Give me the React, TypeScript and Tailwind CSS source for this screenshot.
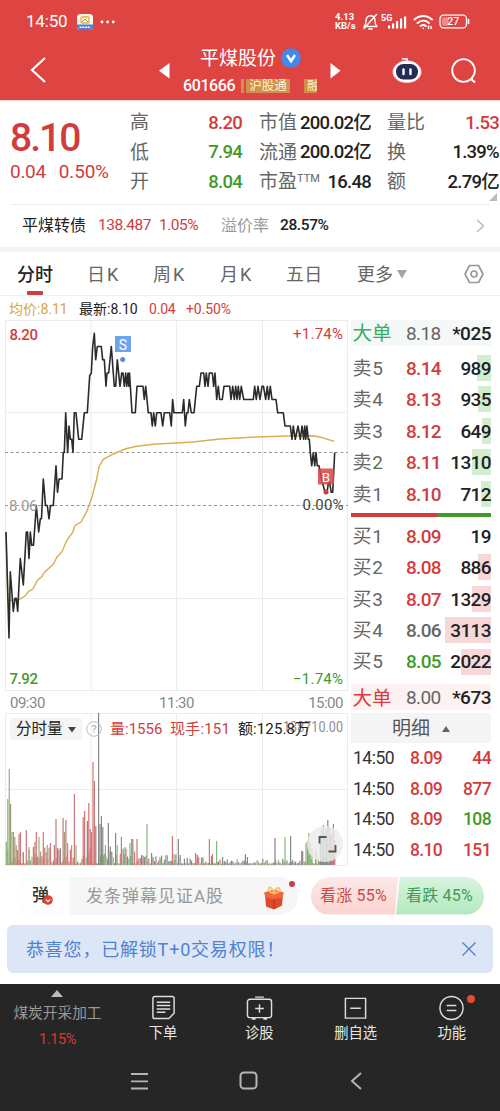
import React from 'react';

const RED = '#d23c3c';
const GREEN = '#3f9a2c';

/* Price line: [x, cents above yesterday's close] */
const pricePoints: [number, number][] = [
  [6, -2], [9, -10], [10.3, -5], [13.3, -8], [15, -7], [16.3, -7], [17.7, -8], [20.3, -4], [23.3, -6], [26.3, -2],
  [27.5, -2], [29, -4], [30.3, -2], [31.7, -3], [33.5, -3], [36.3, 0], [38.7, -2], [40.3, -1], [41.5, -1], [43.3, 2],
  [45.5, 0], [47.3, 0], [49, -1], [50.5, 0], [53.3, 0], [56, 3], [57.5, 1], [59, 2], [62, 2], [63.3, 4],
  [64.3, 4], [65.7, 7], [67.7, 4], [69, 6], [70.3, 5], [71.7, 5], [73, 4], [74.3, 7], [76, 7], [78.7, 5],
  [81.7, 5], [84.3, 7], [87.3, 7], [89.7, 9.8], [91.3, 10], [92.7, 12], [94.3, 13], [95.7, 11], [97.3, 12], [101.3, 12],
  [102.7, 11], [104.3, 11], [106, 9], [107, 10], [108.7, 10], [111.3, 12], [114.3, 9], [115.7, 9], [117.3, 11], [120, 9],
  [121.7, 10], [123, 10], [124.3, 9], [125.7, 10], [126.7, 9], [128, 10], [128.8, 9], [129.5, 10], [132, 7], [135.3, 7],
  [137, 9], [143, 9], [144.3, 8], [145.7, 9], [148.3, 7], [151, 7], [152.3, 6], [153.7, 7], [155.3, 6], [156.7, 7],
  [161, 7], [162.7, 6], [164.3, 7], [169.7, 7], [171.3, 6], [172.6, 8], [174, 7], [182.3, 7], [183.7, 8], [185.3, 6],
  [186.7, 7], [188, 7], [189.3, 8], [191.3, 7], [194, 7], [196.7, 9], [199.3, 9], [201, 10], [203.7, 10], [205, 9],
  [206.3, 10], [208, 9], [209.3, 10], [212.3, 10], [213.7, 9], [215, 10], [216.7, 8], [218.3, 9], [219.7, 8], [222.3, 8],
  [224, 9], [229.7, 9], [231, 8], [232.7, 9], [234.3, 8], [235.7, 9], [237, 8], [238.3, 9], [239.7, 8], [241.3, 9],
  [243.7, 8], [253.3, 8], [254.7, 9], [256.3, 8], [258, 9], [260, 8], [262, 9], [263.5, 9], [265.7, 8], [267.3, 9],
  [268.7, 8], [270.3, 9], [272, 8], [276, 8], [277.7, 7], [283.3, 7], [285, 6], [290.3, 6], [292, 5], [293.3, 6],
  [295.3, 5], [298, 6], [300.3, 5], [302, 6], [303.7, 5], [304.7, 6], [305.8, 5], [306.9, 6], [308.3, 5], [309.3, 5],
  [310.3, 4], [311.7, 3], [313.3, 4], [314.7, 3], [316, 4], [317.3, 3], [319, 3], [321.5, 2], [325, 1], [327, 1],
  [329, 2], [331.3, 1], [332.7, 1], [334.7, 4],
];

const averagePoints =
  '6,212 8,281 13,280 20,279 25,276 28.5,271.5 32.7,269 37.7,260 41.7,256.7 45,251.7 53.5,244 56.7,237.5 62,231.7 66.7,220.7 72.3,213 75,205.7 81,202 86.7,191.7 91.7,178 96.7,159 99,146.7 103.3,139.3 113.3,134 125,129 136.7,126.3 153.3,124.3 180,122.7 193,122 220,119 256.7,117 286.7,116 313,115.7 320,117 334.3,121.3';

type Tone = 'r' | 'g' | 'k' | 'o';

const toneColor: Record<Tone, string> = {
  r: '#cf7676',
  g: '#86b878',
  k: '#878787',
  o: '#a89a78',
};

/* Volume spikes: [x, height, tone] */
const spikes: [number, number, Tone][] = [
  [6.3, 23, 'g'], [7.8, 66, 'g'], [9.3, 96, 'g'], [10.6, 61, 'o'], [12, 33, 'g'], [13.4, 33, 'o'], [14.8, 28, 'o'], [16.2, 20, 'o'],
  [17.5, 15, 'r'], [19, 31, 'r'], [20.4, 33, 'r'], [23.3, 13, 'r'], [26.3, 35, 'r'], [29, 18, 'g'], [33.4, 18, 'r'], [34.9, 23, 'r'],
  [36.3, 33, 'r'], [39, 28, 'g'], [43.3, 33, 'r'], [47.3, 20, 'g'], [50.4, 22, 'r'], [54.4, 20, 'r'], [56, 46, 'r'], [57.6, 17, 'k'],
  [60.4, 17, 'k'], [63.1, 47, 'r'], [64.5, 33, 'o'], [65.9, 45, 'r'], [67.6, 22, 'o'], [71.6, 20, 'g'], [74.4, 71, 'r'], [76, 20, 'g'],
  [83.2, 48, 'r'], [84.6, 54, 'r'], [87.4, 44, 'k'], [88.8, 62, 'r'], [90.2, 36, 'r'], [91.6, 33, 'r'], [93, 103, 'r'], [94.4, 84, 'r'],
  [95.8, 39, 'k'], [98.6, 152, 'k'], [100, 41, 'k'], [101.4, 49, 'k'], [102.8, 38, 'k'], [105.4, 20, 'g'], [108.4, 42, 'k'],
  [115.6, 32, 'k'], [117.2, 20, 'g'], [121.4, 28, 'r'], [125, 18, 'g'], [130, 22, 'g'], [131.5, 26, 'g'], [132.8, 26, 'k'], [137, 26, 'r'],
  [141.6, 10, 'k'], [147, 41, 'g'], [151.6, 12, 'k'], [160, 8, 'g'], [172.4, 29, 'r'], [174, 11, 'g'], [178.4, 26, 'k'],
  [195.6, 12, 'r'], [197.6, 10, 'r'], [209.4, 26, 'r'], [212.4, 11, 'r'], [216.6, 24, 'g'], [222.6, 8, 'k'], [245.4, 11, 'k'],
  [247.4, 8, 'k'], [275, 27, 'k'], [285, 28, 'g'], [290.6, 29, 'k'], [301.6, 14, 'r'], [306, 22, 'g'], [307.4, 24, 'o'], [308.8, 32, 'g'],
  [310.2, 22, 'g'], [312, 16, 'g'], [316, 16, 'o'], [320.4, 30, 'k'], [321.8, 36, 'k'], [323.4, 40, 'k'], [325, 32, 'k'], [326.4, 36, 'k'],
  [327.8, 45, 'k'], [329.2, 38, 'k'], [330.6, 30, 'k'], [332, 32, 'r'], [333.4, 41, 'r'], [334.8, 25, 'r'],
];

/* Low bars filling the minutes between spikes */
const quietBars = Array.from({ length: 231 }, (_, i) => {
  const x = 6.3 + i * 1.425;
  const wave = Math.abs(Math.sin(i * 12.9898) * 43758.5453) % 1;
  const limit = x < 60 ? 16 : x < 105 ? 22 : x < 135 ? 18 : x < 220 ? 9 : x < 300 ? 5 : 13;
  const tones: Tone[] = x < 95 ? ['r', 'r', 'g', 'o'] : x < 225 ? ['k', 'g', 'k', 'r'] : ['k', 'o', 'k', 'g'];
  return { x, h: 1.5 + wave * wave * limit, tone: tones[Math.floor(wave * 97) % 4] };
});

const asks = [
  { label: '卖5', price: '8.14', volume: '989', depth: 14 },
  { label: '卖4', price: '8.13', volume: '935', depth: 13 },
  { label: '卖3', price: '8.12', volume: '649', depth: 9 },
  { label: '卖2', price: '8.11', volume: '1310', depth: 19 },
  { label: '卖1', price: '8.10', volume: '712', depth: 10 },
];

const bids = [
  { label: '买1', price: '8.09', volume: '19', depth: 0, color: 'text-[#d23c3c]' },
  { label: '买2', price: '8.08', volume: '886', depth: 13, color: 'text-[#d23c3c]' },
  { label: '买3', price: '8.07', volume: '1329', depth: 19, color: 'text-[#d23c3c]' },
  { label: '买4', price: '8.06', volume: '3113', depth: 46, color: 'text-[#666]' },
  { label: '买5', price: '8.05', volume: '2022', depth: 30, color: 'text-[#3f9a2c]' },
];

const trades = [
  { price: '8.09', volume: '44', color: 'text-[#d23c3c]' },
  { price: '8.09', volume: '877', color: 'text-[#d23c3c]' },
  { price: '8.09', volume: '108', color: 'text-[#3f9a2c]' },
  { price: '8.10', volume: '151', color: 'text-[#d23c3c]' },
];

function StatusBar() {
  return (
    <div className="flex h-[42px] items-center pt-px pl-[26px] text-white">
      <span className="w-[42px] text-[17px] tracking-[-0.2px]">14:50</span>
      <svg className="ml-[9px]" width="16" height="16" viewBox="0 0 16 16">
        <rect width="16" height="16" rx="3.5" fill="#fdf6ea" />
        <path d="M0 10.5h16v2a3.5 3.5 0 0 1-3.5 3.5h-9A3.5 3.5 0 0 1 0 12.500z" fill="#4a7de0" />
        <rect x="4" y="3" width="8" height="6" rx="1" fill="none" stroke="#e8b23c" strokeWidth="1.3" />
        <path d="M5 8l3-3 3 3" fill="none" stroke="#67b48c" strokeWidth="1" />
        <path d="M2.500 13.200h11" stroke="#fff" strokeWidth="1.4" strokeDasharray="2 .7" />
      </svg>
      <svg className="ml-[7px]" width="16" height="4" viewBox="0 0 16 4" fill="#fff">
        <circle cx="2" cy="2" r="1.4" />
        <circle cx="7.600" cy="2" r="1.4" />
        <circle cx="13.200" cy="2" r="1.4" />
      </svg>
      <div className="ml-[219px] w-[24px] text-[9.500px] leading-[8.5px] font-bold">
        <div>4.13</div>
        <div>KB/s</div>
      </div>
      <svg className="ml-[3px]" width="17" height="18" viewBox="0 0 17 18" fill="none" stroke="#fff" strokeWidth="1.400" strokeLinecap="round" strokeLinejoin="round">
        <path d="M2 13.500h13c-1.500-1.500-2-2.500-2-5.500 0-3-1.700-5.200-4.500-5.200S4 5 4 8c0 3-.5 4-2 5.500zM6.800 16h3.400M14.500 1.500L2 15.500" />
      </svg>
      <svg className="ml-[2px]" width="27" height="16" viewBox="0 0 27 16" fill="#fff">
        <text x="0" y="6.800" fontSize="9" fontWeight="700">5G</text>
        <rect x="7" y="11.500" width="2.200" height="3" />
        <rect x="11" y="9.500" width="2.200" height="5" />
        <rect x="15" y="7" width="2.200" height="7.500" />
        <rect x="19" y="4.500" width="2.200" height="10" />
        <rect x="23" y="2.500" width="2.200" height="12" />
      </svg>
      <svg className="ml-[5px]" width="21" height="16" viewBox="0 0 21 16" fill="none" stroke="#fff" strokeWidth="2" strokeLinecap="round">
        <path d="M1.500 5.500c5-4.700 12.500-4.700 17.500 0M4.500 8.900c3.400-3 8-3 11.500 0M7.500 12c1.800-1.400 3.700-1.400 5.300 0" />
        <path d="M10.200 14.300v.2M15.500 12v2.500M18 12.500v2" strokeWidth="1.500" />
      </svg>
      <svg className="ml-[5px]" width="32" height="15" viewBox="0 0 32 15">
        <rect x="1" y="1.200" width="26.500" height="12.600" rx="3.500" fill="none" stroke="#fff" strokeWidth="1.300" />
        <rect x="3" y="3.200" width="6.500" height="8.600" rx="1.500" fill="#fff" opacity=".4" />
        <path d="M29.500 5.500v4" stroke="#fff" strokeWidth="1.600" strokeLinecap="round" />
        <text x="14.300" y="11.300" fill="#fff" fontSize="10.500" fontWeight="500" textAnchor="middle">27</text>
      </svg>
    </div>
  );
}

function TitleBar() {
  return (
    <div className="flex h-[58px] items-start text-white">
      <svg className="mt-[14px] ml-[29px]" width="18" height="28" viewBox="0 0 18 28" fill="none" stroke="#fff" strokeWidth="2.200">
        <path d="M16 2L3 14l13 12" />
      </svg>
      <svg className="mt-[21px] ml-[112px]" width="11" height="16" viewBox="0 0 11 16" fill="#fff">
        <path d="M10.500 0v15.500L0 7.800z" />
      </svg>
      <div className="ml-[13px] w-[136px] pt-px">
        <div className="flex h-[29px] items-center pl-[17px]">
          <span className="mt-[3px] w-[78px] text-[19px] whitespace-nowrap">平煤股份</span>
          <svg className="ml-[3px]" width="20" height="20" viewBox="0 0 20 20">
            <circle cx="10" cy="10" r="9.800" fill="#4089ee" />
            <path d="M6 7l4 6.200L14 7" fill="none" stroke="#fff" strokeWidth="2.600" />
          </svg>
        </div>
        <div className="flex h-7 items-center overflow-hidden">
          <span className="w-[58px] text-[16px] font-medium tracking-[-0.4px]">601666</span>
          <span className="h-[14px] w-[3px] bg-[#d0914c]" />
          <span className="ml-[2px] h-[14px] w-[44px] bg-[#d0914c] text-center text-[12.500px] leading-[14px] text-[#fff3d6]">沪股通</span>
          <span className="ml-[14px] h-[14px] w-[13px] overflow-hidden bg-[#d0914c] pl-[3px] text-[12px] leading-[14px] text-[#fff3d6]">融</span>
        </div>
      </div>
      <svg className="mt-[21px] ml-[11px]" width="11" height="16" viewBox="0 0 11 16" fill="#fff">
        <path d="M.5 0v15.500L10.500 7.800z" />
      </svg>
      <svg className="mt-[14px] ml-[51px]" width="30" height="30" viewBox="0 0 30 30">
        <path d="M10.500 2.800h4.500v4" fill="none" stroke="#f4dfe6" strokeWidth="1.800" strokeLinecap="round" />
        <ellipse cx="15" cy="16" rx="14.500" ry="11" fill="#efd5e2" />
        <ellipse cx="15" cy="15.300" rx="13.300" ry="10.800" fill="#fff" />
        <rect x="4" y="8" width="22" height="15.500" rx="7.500" fill="#232d55" />
        <path d="M11.500 13.500v4.500M18.500 13.500v4.500" stroke="#fff" strokeWidth="2.400" strokeLinecap="round" />
      </svg>
      <svg className="mt-[15px] ml-[28px]" width="28" height="28" viewBox="0 0 28 28" fill="none" stroke="#fff" strokeWidth="1.800">
        <circle cx="13.500" cy="13.500" r="11.300" />
        <path d="M20.500 21.500l4.500 4" strokeWidth="2.200" />
      </svg>
    </div>
  );
}

interface StatProps {
  label: React.ReactNode;
  value: string;
  color?: string;
}

const Stat: React.FC<StatProps> = ({ label, value, color = 'text-[#222]' }) => (
  <div className="flex h-[29.200px] items-center justify-between whitespace-nowrap">
    <span className="text-[19px] text-[#666]">{label}</span>
    <span className={`pt-px text-[18.500px] font-medium tracking-[-0.75px] ${color}`}>{value}</span>
  </div>
);

function Quote() {
  return (
    <>
      <div className="flex h-[104px] border-t border-[#ffd9d3] pt-[8px]">
        <div className="w-[130px] pl-[10px] text-[#d23c3c]">
          <div className="mt-[9px] h-[40px] text-[39px] leading-[40px] font-medium tracking-[-2px]">8.10</div>
          <div className="mt-[2px] flex h-6 items-center gap-[13px] text-[19px] tracking-[-0.300px]">
            <span>0.04</span>
            <span className="tracking-[-0.200px]">0.50%</span>
          </div>
        </div>
        <div className="w-[112px]">
          <Stat label="高" value="8.20" color="text-[#d23c3c]" />
          <Stat label="低" value="7.94" color="text-[#3f9a2c]" />
          <Stat label="开" value="8.04" color="text-[#3f9a2c]" />
        </div>
        <div className="ml-[17px] w-[112px]">
          <Stat label="市值" value="200.02亿" />
          <Stat label="流通" value="200.02亿" />
          <Stat label={<>市盈<sup className="relative top-[-6px] align-baseline text-[11px] leading-none">TTM</sup></>} value="16.48" />
        </div>
        <div className="relative ml-[16px] w-[112px]">
          <Stat label="量比" value="1.53" color="text-[#d23c3c]" />
          <Stat label="换" value="1.39%" />
          <Stat label="额" value="2.79亿" />
          <svg className="absolute right-[2px] bottom-[3px]" width="8" height="8" viewBox="0 0 8 8">
            <path d="M8 0v8H0z" fill="#bbb" />
          </svg>
        </div>
      </div>
      <div className="mx-[10px] h-px bg-[#eee]" />
      <div className="flex h-[42px] items-center pl-[22px] text-[15.500px]">
        <span className="w-[76px] text-[16px] text-[#222]">平煤转债</span>
        <span className="w-[61px] tracking-[-0.500px] text-[#d23c3c]">138.487</span>
        <span className="w-[62px] tracking-[-0.500px] text-[#d23c3c]">1.05%</span>
        <span className="w-[59px] text-[16px] text-[#999]">溢价率</span>
        <span className="flex-1 font-medium tracking-[-0.400px] text-[#222]">28.57%</span>
        <svg className="mr-[15px]" width="9" height="14" viewBox="0 0 9 14" fill="none" stroke="#bbb" strokeWidth="1.500">
          <path d="M1 1l6.500 6L1 13" />
        </svg>
      </div>
      <div className="h-[5px] bg-[#f3f3f3]" />
    </>
  );
}

function Tabs() {
  return (
    <div className="relative flex h-[44px] items-center border-b border-[#f0f0f0] pt-px pl-[17px] text-[18px] whitespace-nowrap text-[#666]">
      <span className="w-[70px] font-medium text-[#222]">分时</span>
      <span className="w-[66px] tracking-[2px]">日K</span>
      <span className="w-[67px] tracking-[2px]">周K</span>
      <span className="w-[66px] tracking-[2px]">月K</span>
      <span className="w-[71px] tracking-[0.300px]">五日</span>
      <span className="w-[40px]">更多</span>
      <svg width="10" height="9" viewBox="0 0 10 9">
        <path d="M0 0h10L5 8.500z" fill="#a5a5a5" />
      </svg>
      <svg className="ml-[57px]" width="20" height="20" viewBox="0 0 20 20" fill="none" stroke="#999" strokeWidth="1.700" strokeLinejoin="round">
        <path d="M5.500 1.500h9L19 10l-4.500 8.500h-9L1 10z" />
        <circle cx="10" cy="10" r="3" />
      </svg>
      <span className="absolute bottom-0 left-[27px] h-[4px] w-[16px] rounded-[1px] bg-[#c9403f]" />
    </div>
  );
}

function AverageLine() {
  return (
    <div className="flex h-[24px] items-center pt-[2px] pl-[9px] text-[14px] whitespace-nowrap">
      <span className="w-[70px] text-[#d9a441]">均价:8.11</span>
      <span className="w-[70px] text-[#222]">最新:8.10</span>
      <span className="w-[37px] tracking-[-0.200px] text-[#d23c3c]">0.04</span>
      <span className="text-[#d23c3c] tracking-[-0.100px]">+0.50%</span>
    </div>
  );
}

function PriceChart() {
  const line = pricePoints.map(([x, k]) => `${x},${(185.5 - k * 13.25).toFixed(1)}`).join(' ');
  return (
    <svg className="block" width="349" height="371" viewBox="0 0 349 371">
      <path d="M5.500 .5h342v370h-342zM91 0v370M176.500 0v370M262.500 0v370M5 92.500h343M5 278.500h343" fill="none" stroke="#ececec" />
      <path d="M5 132.500h343M5 185.500h343" stroke="#999" strokeDasharray="3 2.500" />
      <polyline points={averagePoints} fill="none" stroke="#d9ae50" strokeWidth="1.400" />
      <polyline points={line} fill="none" stroke="#2b2b2b" strokeWidth="1.600" strokeLinejoin="round" />
      <rect x="115" y="16" width="16" height="16" fill="#6fa3ee" />
      <text x="123" y="29.500" fill="#fff" fontSize="14" textAnchor="middle">S</text>
      <circle cx="122.700" cy="39.500" r="2.500" fill="#6488cf" />
      <rect x="318" y="148.500" width="16" height="16" fill="#db4848" fillOpacity=".88" />
      <text x="326" y="161.500" fill="#fff" fontSize="13.500" textAnchor="middle">B</text>
      <circle cx="326" cy="172" r="2.500" fill="#d23c3c" />
      <g fontSize="15" fontWeight="500">
        <text x="9.500" y="19.500" fill={RED} textLength="28.500">8.20</text>
        <text x="9" y="191" fill="#999" textLength="28.500" fontWeight="400">8.06</text>
        <text x="9.500" y="363.500" fill={GREEN} textLength="28.500">7.92</text>
        <text x="293" y="19" fill={RED} textLength="50" fontWeight="400">+1.74%</text>
        <text x="302.500" y="190" fill="#444" textLength="41" fontWeight="400">0.00%</text>
        <text x="293" y="363.500" fill={GREEN} textLength="50" fontWeight="400">−1.74%</text>
      </g>
    </svg>
  );
}

function VolumeChart() {
  return (
    <div className="relative">
      <svg className="block" width="349" height="153" viewBox="0 0 349 153">
        <path d="M5.500 .5h342v152h-342zM91 0v152M176.500 0v152M262.500 0v152M5 76.500h343" fill="none" stroke="#ececec" />
        {quietBars.map((b, i) => (
          <rect key={i} x={b.x - 0.6} y={152 - b.h} width="1.200" height={b.h} fill={toneColor[b.tone]} />
        ))}
        {spikes.map(([x, h, tone], i) => (
          <rect key={i} x={x - 0.6} y={152 - h} width="1.200" height={h} fill={toneColor[tone]} />
        ))}
        <circle cx="325" cy="131" r="18" fill="#ececec" fillOpacity=".82" />
        <path d="M319.500 130.500v-6.500h7M335.500 132v6.500h-7" fill="none" stroke="#555" strokeWidth="1.800" />
        <text x="283" y="19" fill="#8c8c8c" fontSize="14.500" textLength="60" lengthAdjust="spacingAndGlyphs">138710.00</text>
      </svg>
      <div className="absolute top-[5px] left-[10px] flex h-[22px] items-center text-[15px] whitespace-nowrap">
        <span className="flex h-[22px] w-[72px] items-center rounded-[3px] bg-[#f3f3f3]/90 pt-px pl-[6px] text-[15.500px] text-[#222]">
          分时量
          <svg className="ml-[5px]" width="8" height="6" viewBox="0 0 8 6">
            <path d="M0 0h8L4 5.500z" fill="#444" />
          </svg>
        </span>
        <svg className="ml-[4px]" width="16" height="16" viewBox="0 0 16 16">
          <circle cx="8" cy="8" r="7.300" fill="none" stroke="#bbb" />
          <text x="8" y="12" fill="#aaa" fontSize="11.500" textAnchor="middle">?</text>
        </svg>
        <span className="ml-[8px] w-[60px] text-[#d23c3c]">量:1556</span>
        <span className="w-[68px] tracking-[0.200px] text-[#d23c3c]">现手:151</span>
        <span className="tracking-[0.100px] text-[#222]">额:125.8万</span>
      </div>
    </div>
  );
}

interface LevelProps {
  label: string;
  price: string;
  volume: string;
  depth: number;
  color: string;
  depthColor: string;
}

const Level: React.FC<LevelProps> = ({ label, price, volume, depth, color, depthColor }) => (
  <div className="relative flex h-[31.400px] items-center text-[19px]">
    <span className="absolute top-[2px] right-0 h-[26px] opacity-90" style={{ width: depth, backgroundColor: depthColor }} />
    <span className="relative w-[55px] pt-px pl-[1.500px] tracking-[0.800px] text-[#666]">{label}</span>
    <span className={`relative w-[40px] pt-px font-medium tracking-[-0.700px] ${color}`}>{price}</span>
    <span className="relative flex-1 pt-px text-right font-medium tracking-[-0.600px] text-[#222]">{volume}</span>
  </div>
);

function OrderBook() {
  return (
    <div className="ml-[2px] w-[140px]">
      <div className="flex h-[26px] items-center bg-[#f4f9f8] text-[19px]">
        <span className="w-[55px] pt-[2px] pl-[1.500px] text-[19.500px] text-[#38ad63]">大单</span>
        <span className="pt-[2px] tracking-[-0.600px] text-[#666]">8.18</span>
        <span className="flex-1 pt-[2px] text-right font-medium tracking-[-0.500px] text-[#222]">*025</span>
      </div>
      <div className="mt-[7px]">
        {asks.map((row) => (
          <Level key={row.label} {...row} color="text-[#d23c3c]" depthColor="#cdebcb" />
        ))}
      </div>
      <div className="mt-[3px] flex h-[4px]">
        <span className="w-[86px] bg-[#d23c3c]" />
        <span className="flex-1 bg-[#3f9a2c]" />
      </div>
      <div className="mt-[4px]">
        {bids.map((row) => (
          <Level key={row.label} {...row} depthColor="#f7d3d5" />
        ))}
      </div>
      <div className="mt-[6px] flex h-[26px] items-center bg-[#fdf2f2] text-[19px]">
        <span className="w-[55px] pt-[3px] pl-[1.500px] text-[19.500px] text-[#e0383c]">大单</span>
        <span className="pt-[3px] tracking-[-0.600px] text-[#666]">8.00</span>
        <span className="flex-1 pt-[3px] text-right font-medium tracking-[-0.500px] text-[#222]">*673</span>
      </div>
      <div className="mt-[3px] flex h-[30px] items-center bg-[#f4f4f4] pt-[3px] pl-[41px] text-[19px] text-[#555]">
        明细
        <svg className="ml-[12px]" width="8" height="6" viewBox="0 0 8 6">
          <path d="M4 0l4 6H0z" fill="#666" />
        </svg>
      </div>
      {trades.map((t, i) => (
        <div key={i} className="flex h-[30.500px] items-center text-[17.500px]">
          <span className="w-[59px] pl-[2px] tracking-[-0.500px] text-[#333]">14:50</span>
          <span className="font-medium tracking-[-0.700px] text-[#d23c3c]">{t.price}</span>
          <span className={`flex-1 text-right font-medium tracking-[-0.600px] ${t.color}`}>{t.volume}</span>
        </div>
      ))}
    </div>
  );
}

function CommentBar() {
  return (
    <div className="flex h-[60px] items-center pt-px pl-[16px]">
      <div className="relative flex h-[38px] w-[282px] items-center overflow-visible rounded-full bg-[#f6f6f6]">
        <div className="relative flex h-full w-[54px] items-center rounded-l-full bg-[#fdfdfd] pl-[16px] text-[17px] font-medium text-[#333]">
          弹
          <svg className="absolute top-[18px] left-[27px]" width="10" height="10" viewBox="0 0 10 10">
            <circle cx="5" cy="5" r="4.800" fill="#dc4238" />
            <path d="M2.800 4.300L5 6.600l2.300-2.300" fill="none" stroke="#fff" strokeWidth="1.200" />
          </svg>
        </div>
        <span className="ml-[16px] flex-1 pt-[2px] text-[17px] tracking-[1px] text-[#999]">发条弹幕见证A股</span>
        <svg className="mt-[4px] mr-[13px]" width="22" height="24" viewBox="0 0 22 24">
          <path d="M2 9l18-1-1 11.500L11 23.500 3 20.500z" fill="#de4a2e" />
          <path d="M1 6.500l10-3 10 3-2 5-8 2-8.500-2z" fill="#f0663c" />
          <path d="M11 7.500C7 7 4.500 4 6 2s4 1.500 5 5c1-3.500 4-6.500 5.500-4.500S15 7 11 7.500z" fill="none" stroke="#f6c266" strokeWidth="1.600" />
          <path d="M11 13v10" stroke="#c5351f" strokeWidth="1.200" />
        </svg>
        <span className="absolute top-[4px] right-[3px] h-[6px] w-[6px] rounded-full bg-[#d23c3c]" />
      </div>
      <div className="ml-[13px] flex h-[38px] w-[173px] overflow-hidden rounded-full text-[16px] whitespace-nowrap">
        <div className="flex w-[87px] items-center bg-linear-to-b from-[#fce9e8] to-[#fad4d1] pt-px pl-[9px] tracking-[0.200px] text-[#cc4a46] [clip-path:polygon(0_0,100%_0,84px_100%,0_100%)]">
          看涨&nbsp;55%
        </div>
        <div className="-ml-[2px] flex flex-1 items-center bg-linear-to-b from-[#d9f3df] to-[#b3e8bf] pt-px pl-[10px] tracking-[0.200px] text-[#429a55] [clip-path:polygon(4px_0,100%_0,100%_100%,0_100%)]">
          看跌&nbsp;45%
        </div>
      </div>
    </div>
  );
}

function Notice() {
  return (
    <div className="mx-[7px] flex h-[48px] items-center rounded-[6px] bg-[#dce6f7] pl-[19px] text-[18px] text-[#4f82cf]">
      <span className="flex-1 pt-px tracking-[0.800px]">恭喜您，已解锁T+0交易权限！</span>
      <svg className="mr-[17px]" width="14" height="14" viewBox="0 0 14 14" stroke="#4f7fc4" strokeWidth="1.300">
        <path d="M.5 .5l13 13M13.500 .5l-13 13" />
      </svg>
    </div>
  );
}

function BottomBar() {
  const items = [
    {
      label: '下单',
      icon: (
        <path d="M5 1.500h18a2 2 0 0 1 2 2V19l-5.500 5.500H5a2 2 0 0 1-2-2v-19a2 2 0 0 1 2-2zM7 7.500h14M7 11h14M7 14.500h14M7 18h9" />
      ),
    },
    {
      label: '诊股',
      icon: (
        <path d="M4 4.500h20a2.500 2.500 0 0 1 2.500 2.500v14a2.500 2.500 0 0 1-2.500 2.500H4A2.500 2.500 0 0 1 1.500 21V7A2.500 2.500 0 0 1 4 4.500zM9.500 2.200h9M14 9.500v9M9.500 14h9M6 25h4M18 25h4" />
      ),
    },
    { label: '删自选', icon: <path d="M3.500 3.500h21v20.500h-21zM8.500 13.700h11" /> },
    {
      label: '功能',
      icon: <path d="M14 1.500a12 12 0 1 1 0 24 12 12 0 0 1 0-24zM9 11h10M9 16h10" />,
    },
  ];

  return (
    <div className="mt-[11px] h-[127px] bg-[#262626]">
      <div className="flex h-[66px]">
        <div className="flex w-[115px] flex-col items-center pt-[6px] text-[#999]">
          <svg className="shrink-0" width="12" height="7" viewBox="0 0 12 7">
            <path d="M6 0l6 7H0z" fill="#bbb" />
          </svg>
          <span className="mt-[5px] text-[14.700px] leading-[22px]">煤炭开采加工</span>
          <span className="mt-[5px] text-[14.500px] leading-[22px] tracking-[-0.400px] text-[#e0362a]">1.15%</span>
        </div>
        {items.map((item) => (
          <div key={item.label} className="relative flex w-[96.300px] flex-col items-center pt-[11px]">
            <svg width="27" height="26" viewBox="0 0 28 27" fill="none" stroke="#ddd" strokeWidth="1.500">
              {item.icon}
            </svg>
            <span className="mt-px text-[14.300px] leading-[22px] text-[#e8e8e8]">{item.label}</span>
            {item.label === '功能' && (
              <span className="absolute top-[11px] left-[63px] h-[8px] w-[8px] rounded-full bg-[#ea4a30]" />
            )}
          </div>
        ))}
      </div>
      <div className="flex h-[61px] items-center pl-[130px]">
        <svg width="19" height="18" viewBox="0 0 19 18" stroke="#b5b5b5" strokeWidth="1.800">
          <path d="M1 2h17M1 9.300h17M1 16.500h17" />
        </svg>
        <svg className="ml-[90px]" width="19" height="19" viewBox="0 0 19 19" fill="none" stroke="#b5b5b5" strokeWidth="2">
          <rect x="1.500" y="1.500" width="16" height="16" rx="3.500" />
        </svg>
        <svg className="ml-[92px]" width="12" height="18" viewBox="0 0 12 18" fill="none" stroke="#b5b5b5" strokeWidth="2">
          <path d="M11 1L2 9l9 8" />
        </svg>
      </div>
    </div>
  );
}

export default function App() {
  return (
    <div className="h-[1111px] w-[500px] overflow-hidden bg-white font-[Roboto,'Noto_Sans_CJK_SC',sans-serif]">
      <div className="bg-[#de4441]">
        <StatusBar />
        <TitleBar />
      </div>
      <Quote />
      <Tabs />
      <AverageLine />
      <div className="flex h-[545px]">
        <div className="w-[349px]">
          <PriceChart />
          <div className="flex h-[22px] items-center justify-between pt-[2px] pr-[6px] pl-[10px] text-[15px] tracking-[-0.500px] text-[#888]">
            <span>09:30</span>
            <span>11:30</span>
            <span>15:00</span>
          </div>
          <VolumeChart />
        </div>
        <OrderBook />
      </div>
      <CommentBar />
      <Notice />
      <BottomBar />
    </div>
  );
}
